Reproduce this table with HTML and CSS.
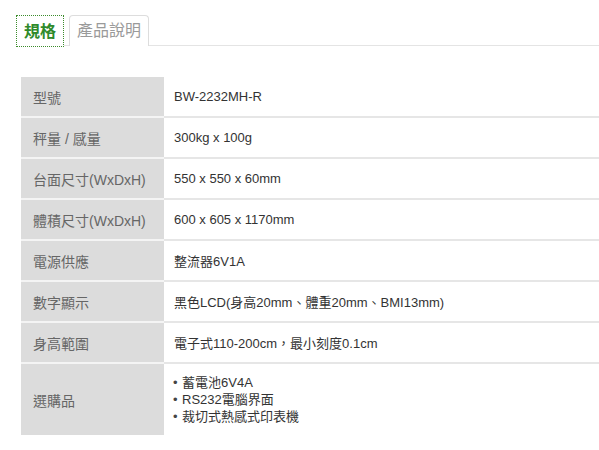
FILE: index.html
```html
<!DOCTYPE html>
<html lang="zh-Hant">
<head>
<meta charset="utf-8">
<title>規格</title>
<link rel="stylesheet" href="styles.css">
</head>
<body>
<div class="page">
  <ul class="tabs">
    <li class="tab active">規格</li>
    <li class="tab">產品說明</li>
  </ul>
  <table class="spec">
    <tr><th>型號</th><td>BW-2232MH-R</td></tr>
    <tr><th>秤量 / 感量</th><td>300kg x 100g</td></tr>
    <tr><th>台面尺寸(WxDxH)</th><td>550 x 550 x 60mm</td></tr>
    <tr><th>體積尺寸(WxDxH)</th><td>600 x 605 x 1170mm</td></tr>
    <tr><th>電源供應</th><td>整流器6V1A</td></tr>
    <tr><th>數字顯示</th><td>黑色LCD(身高20mm、體重20mm、BMI13mm)</td></tr>
    <tr><th>身高範圍</th><td>電子式110-200cm，最小刻度0.1cm</td></tr>
    <tr class="last"><th>選購品</th><td>
      <ul class="opts">
        <li>蓄電池6V4A</li>
        <li>RS232電腦界面</li>
        <li>裁切式熱感式印表機</li>
      </ul>
    </td></tr>
  </table>
</div>
</body>
</html>
```
FILE: styles.css
```css
html, body {
  margin: 0;
  padding: 0;
  background: #fff;
}
body {
  font-family: "Liberation Sans", "Noto Sans CJK TC", sans-serif;
  color: #333;
}
.page {
  padding-top: 15px;
}
.tabs {
  list-style: none;
  margin: 0 0 0 16px;
  padding: 0;
  display: flex;
  gap: 5px;
  height: 30px;
  border-bottom: 1px solid #e4e4e4;
}
.tab {
  box-sizing: border-box;
  height: 31px;
  font-size: 16px;
  line-height: 30px;
  padding: 0 7px;
  color: #9a9a9a;
  background: #fff;
  border: 1px solid #dddddd;
  border-bottom: none;
  border-radius: 4px 4px 0 0;
}
.tab.active {
  height: 32px;
  color: #2f8a2a;
  font-weight: bold;
  border: 1px dotted #3c8c2c;
  border-radius: 0;
  padding: 0 7px;
  line-height: 31px;
}
.spec {
  margin: 31px 0 0 21px;
  width: 578px;
  border-collapse: collapse;
  border-spacing: 0;
}
.spec th {
  width: 143px;
  box-sizing: border-box;
  background: #dcdcdc;
  color: #666;
  font-weight: normal;
  font-size: 14px;
  text-align: left;
  padding: 0 0 0 12px;
  height: 39px;
  border-bottom: 2px solid #f4f4f4;
  vertical-align: middle;
  white-space: nowrap;
}
.spec td {
  font-size: 13px;
  color: #333;
  padding: 0 0 0 10px;
  height: 39px;
  border-bottom: 2px solid #e6e6e6;
  vertical-align: middle;
}
.spec tr.last th,
.spec tr.last td {
  border-bottom: none;
  height: 71px;
}
.opts {
  list-style: none;
  margin: 0;
  padding: 0;
  line-height: 17px;
  color: #333;
}
.opts li::before {
  content: "•";
  display: inline-block;
  width: 9px;
  margin-left: -1px;
  color: #444;
}
```
